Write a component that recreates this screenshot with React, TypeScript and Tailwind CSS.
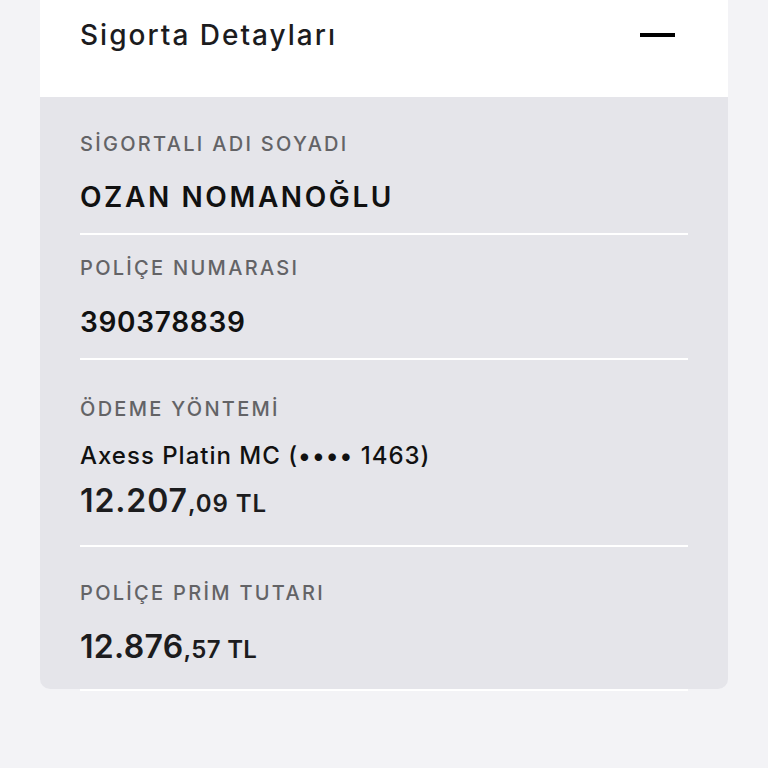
import React from 'react';

const font = { fontFamily: 'Inter, "Noto Sans", "DejaVu Sans", sans-serif' };

function Divider() {
  return <div className="mx-[40px] h-[2px] bg-white" />;
}

function Label({ children }: { children: React.ReactNode }) {
  return <p className="text-[20px] leading-[24px] font-medium text-[#636366] tracking-[2.3px]">{children}</p>;
}

function Amount({ whole, cents, spacing }: { whole: string; cents: string; spacing: string }) {
  return (
    <p className={`leading-[36px] text-[#1c1c1e] font-semibold ${spacing}`}>
      <span className="text-[32px]">{whole}</span>
      <span className="text-[24px]">,{cents} TL</span>
    </p>
  );
}

export default function App() {
  return (
    <div className="min-h-[768px] bg-[#f3f3f6] px-[40px]" style={font}>
      <div className="bg-white h-[97px] flex items-center justify-between pl-[40px] pr-[53px] pb-[28px]">
        <h2 className="text-[28px] leading-[34px] font-medium text-[#1c1c1e] tracking-[2px]">Sigorta Detayları</h2>
        <div className="w-[35px] h-[4px] bg-black" />
      </div>

      <div className="bg-[#e5e5ea] rounded-b-[10px]">
        <div className="px-[40px] pt-[35px] pb-[20px]">
          <Label>SİGORTALI ADI SOYADI</Label>
          <p className="mt-[25px] text-[28px] leading-[32px] font-semibold text-[#111] tracking-[2.6px]">OZAN NOMANOĞLU</p>
        </div>
        <Divider />

        <div className="px-[40px] pt-[21px] pb-[20px]">
          <Label>POLİÇE NUMARASI</Label>
          <p className="mt-[26px] text-[28px] leading-[32px] font-semibold text-[#111] tracking-[0.7px]">390378839</p>
        </div>
        <Divider />

        <div className="px-[40px] pt-[37px] pb-[21px]">
          <Label>ÖDEME YÖNTEMİ</Label>
          <p className="mt-[19px] text-[24px] leading-[32px] font-medium text-[#111] tracking-[1px]">Axess Platin MC (•••• 1463)</p>
          <div className="mt-[11px]">
            <Amount whole="12.207" cents="09" spacing="tracking-[0.9px]" />
          </div>
        </div>
        <Divider />

        <div className="px-[40px] pt-[34px] pb-[19px]">
          <Label>POLİÇE PRİM TUTARI</Label>
          <div className="mt-[24px]">
            <Amount whole="12.876" cents="57" spacing="tracking-[0.3px]" />
          </div>
        </div>
      </div>
      <Divider />
    </div>
  );
}
